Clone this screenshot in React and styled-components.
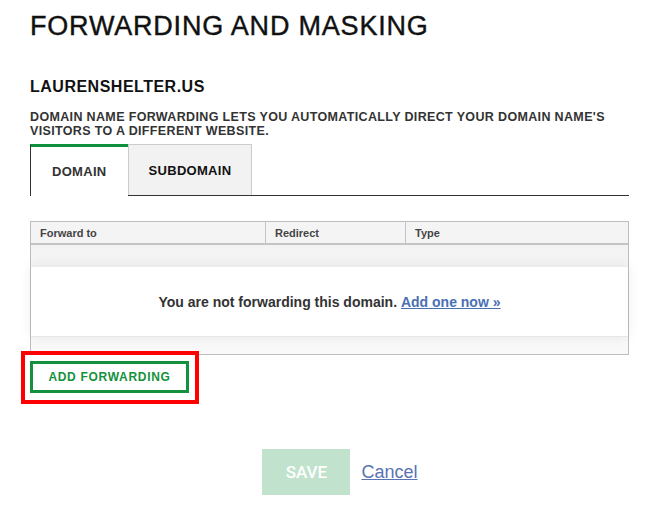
import React from 'react';
import styled, { createGlobalStyle } from 'styled-components';

const GlobalStyle = createGlobalStyle`
    body {
        margin: 0;
        background: #fff;
        font-family: "Liberation Sans", Arial, sans-serif;
    }
`;

const App = () => {
    return (
        <Page>
            <GlobalStyle />
            <Title>FORWARDING AND MASKING</Title>
            <DomainName>LAURENSHELTER.US</DomainName>
            <Description>
                DOMAIN NAME FORWARDING LETS YOU AUTOMATICALLY DIRECT YOUR DOMAIN NAME'S VISITORS TO A DIFFERENT WEBSITE.
            </Description>
            <TabRow>
                <Tab active>DOMAIN</Tab>
                <Tab>SUBDOMAIN</Tab>
            </TabRow>
            <Table>
                <HeaderRow>
                    <HeaderCell width="235px">Forward to</HeaderCell>
                    <HeaderCell width="140px">Redirect</HeaderCell>
                    <HeaderCell last>Type</HeaderCell>
                </HeaderRow>
                <TableBody>
                    <EmptyPanel>
                        You are not forwarding this domain.&nbsp;<EmptyLink href="#">Add one now »</EmptyLink>
                    </EmptyPanel>
                </TableBody>
            </Table>
            <AddButton>ADD FORWARDING</AddButton>
            <Footer>
                <SaveButton disabled>SAVE</SaveButton>
                <CancelLink href="#">Cancel</CancelLink>
            </Footer>
        </Page>
    );
};

export default App;

const Page = styled.div`
    box-sizing: border-box;
    width: 672px;
    padding: 11px 43px 20px 30px;
`;

const Title = styled.h1`
    margin: 0;
    font-size: 27px;
    line-height: 30px;
    font-weight: 400;
    letter-spacing: 0.8px;
    color: #111;
    -webkit-text-stroke: 0.4px #111;
`;

const DomainName = styled.h2`
    margin: 36px 0 0;
    font-size: 16px;
    line-height: 20px;
    font-weight: 700;
    letter-spacing: 0.5px;
    color: #111;
`;

const Description = styled.p`
    margin: 13px 0 0;
    font-size: 12.5px;
    line-height: 14px;
    font-weight: 700;
    letter-spacing: 0.35px;
    color: #333;
`;

const TabRow = styled.div`
    display: flex;
    align-items: flex-end;
    margin-top: 6px;
    border-bottom: 1px solid #333;
`;

const Tab = styled.div`
    box-sizing: border-box;
    display: flex;
    align-items: center;
    justify-content: center;
    height: ${(p) => (p.active ? '52px' : '51px')};
    margin-bottom: ${(p) => (p.active ? '-1px' : '0')};
    padding: 0 ${(p) => (p.active ? '21px' : '20px')};
    font-size: 13px;
    font-weight: 700;
    letter-spacing: 0.3px;
    color: ${(p) => (p.active ? '#333' : '#111')};
    background: ${(p) => (p.active ? '#fff' : '#f2f2f2')};
    border-top: ${(p) => (p.active ? '3px solid #0e8f3b' : '1px solid #ccc')};
    border-left: 1px solid ${(p) => (p.active ? '#333' : '#ccc')};
    border-right: ${(p) => (p.active ? 'none' : '1px solid #ccc')};
`;

const Table = styled.div`
    margin-top: 25px;
    border: 1px solid #bdbdbd;
`;

const HeaderRow = styled.div`
    display: flex;
    height: 21px;
    background: #f4f4f4;
    border-bottom: 2px solid #c4c4c4;
`;

const HeaderCell = styled.div`
    box-sizing: border-box;
    display: flex;
    align-items: center;
    flex: ${(p) => (p.last ? '1' : `0 0 ${p.width}`)};
    padding-left: 9px;
    font-size: 11px;
    font-weight: 700;
    color: #444;
    border-right: ${(p) => (p.last ? 'none' : '1px solid #c4c4c4')};
`;

const TableBody = styled.div`
    padding: 21px 0 17px;
    background: linear-gradient(#f3f3f3, #f9f9f9);
`;

const EmptyPanel = styled.div`
    display: flex;
    align-items: center;
    justify-content: center;
    height: 69px;
    background: #fff;
    border-top: 1px solid #ececec;
    border-bottom: 1px solid #e6e6e6;
    box-shadow: 0 0 12px rgba(0, 0, 0, 0.07);
    font-size: 14px;
    font-weight: 700;
    color: #333;
`;

const EmptyLink = styled.a`
    color: #4a6fb5;
    text-decoration: underline;
`;

const AddButton = styled.button`
    position: relative;
    display: block;
    box-sizing: border-box;
    width: 159px;
    height: 32px;
    margin-top: 6px;
    padding: 0;
    background: #fff;
    border: 3px solid #14913c;
    font-family: "Liberation Sans", Arial, sans-serif;
    font-size: 12px;
    font-weight: 700;
    letter-spacing: 0.7px;
    color: #14913c;

    &::after {
        content: '';
        position: absolute;
        top: -13px;
        left: -12px;
        right: -13px;
        bottom: -14px;
        border: 4px solid #ff0000;
    }
`;

const Footer = styled.div`
    display: flex;
    align-items: center;
    justify-content: center;
    gap: 11px;
    margin-top: 56px;
    padding-left: 21px;
`;

const SaveButton = styled.button`
    width: 88px;
    height: 46px;
    padding: 0;
    border: none;
    background: #c1e2cd;
    color: #fff;
    font-family: Roboto, "Liberation Sans", sans-serif;
    font-size: 17px;
    font-weight: 500;
`;

const CancelLink = styled.a`
    font-size: 18px;
    color: #5773b2;
    text-decoration: underline;
`;
